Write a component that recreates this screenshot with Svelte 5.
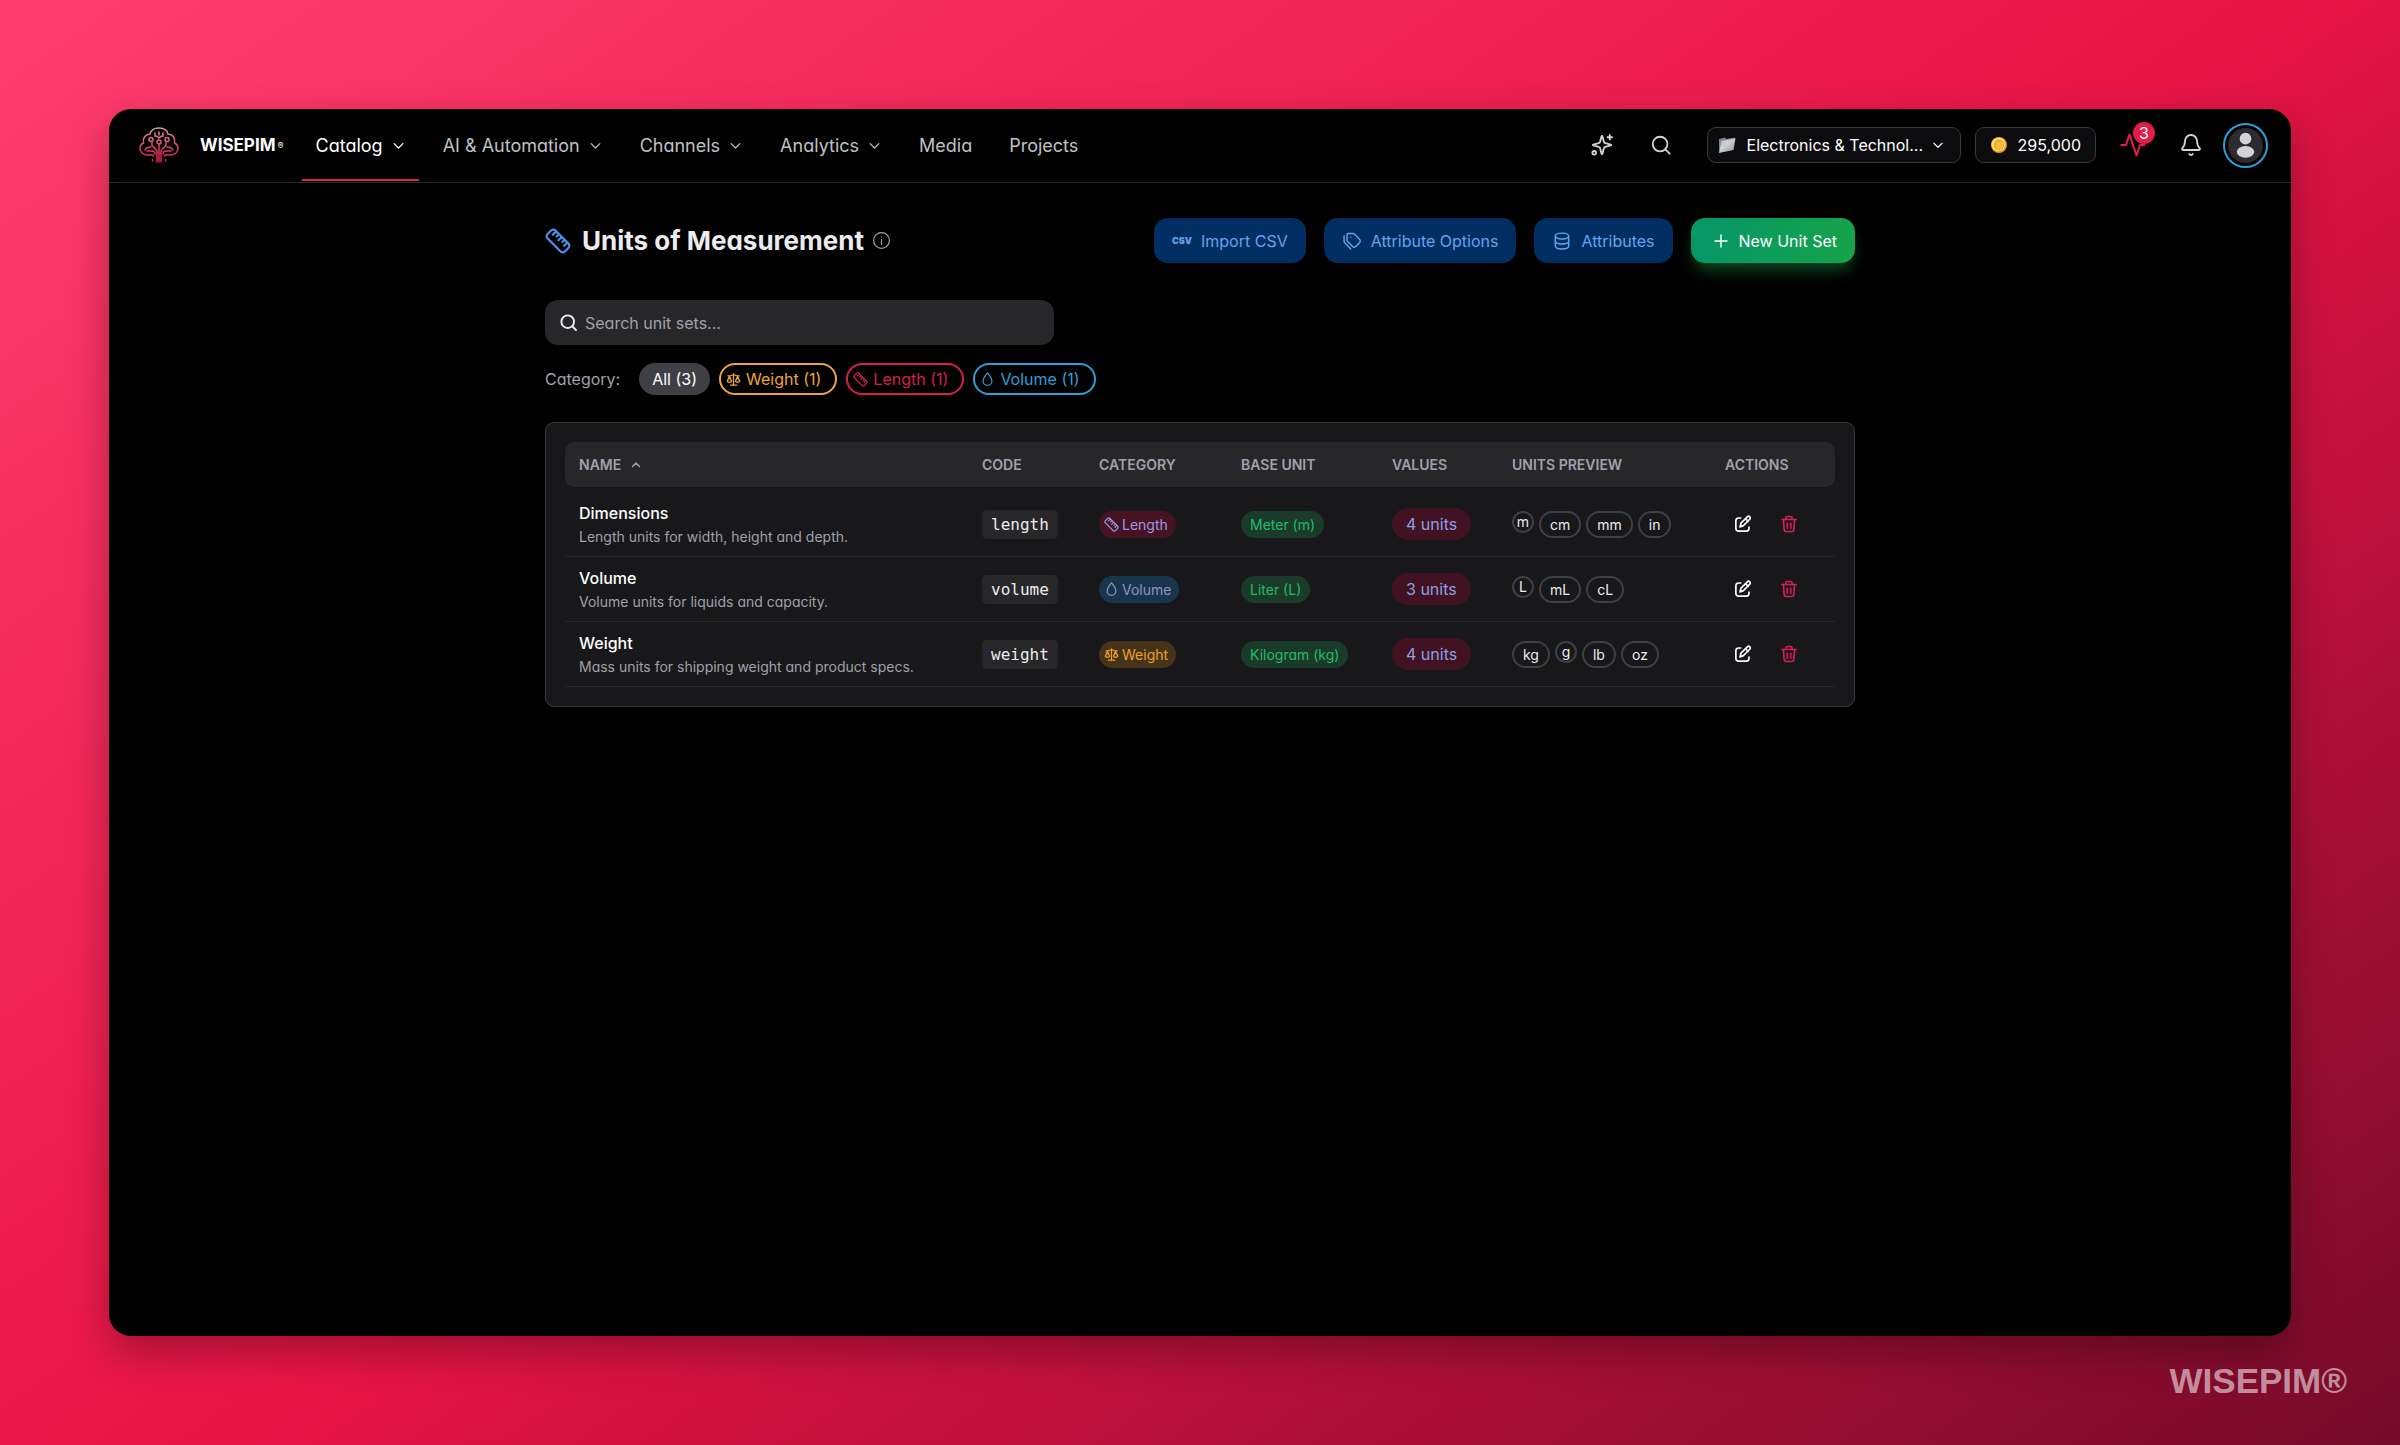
<script lang="ts">
  interface UnitSet {
    name: string;
    description: string;
    code: string;
    category: string;
    baseUnit: string;
    units: string[];
  }

  const icons: Record<string, string[]> = {
    chevron: ['M5 9l7 7 7-7'],
    search: ['M11 3a8 8 0 1 0 0 16a8 8 0 0 0 0-16', 'M17 17l4.5 4.5'],
    sparkles: [
      'M9.937 15.5A2 2 0 0 0 8.5 14.063l-6.135-1.582a.5.5 0 0 1 0-.962L8.5 9.936A2 2 0 0 0 9.937 8.5l1.582-6.135a.5.5 0 0 1 .963 0L14.063 8.5A2 2 0 0 0 15.5 9.937l6.135 1.581a.5.5 0 0 1 0 .964L15.5 14.063a2 2 0 0 0-1.437 1.437l-1.582 6.135a.5.5 0 0 1-.963 0z',
      'M20.5 1v5',
      'M23 3.5h-5',
      'M3.5 18.5a2 2 0 1 0 0 4a2 2 0 0 0 0-4'
    ],
    activity: ['M22 12h-4l-3 9L9 3l-3 9H2'],
    bell: [
      'M10.268 21a2 2 0 0 0 3.464 0',
      'M3.262 15.326A1 1 0 0 0 4 17h16a1 1 0 0 0 .74-1.673C19.41 13.956 18 12.499 18 8A6 6 0 0 0 6 8c0 4.499-1.411 5.956-2.738 7.326'
    ],
    info: ['M12 2a10 10 0 1 0 0 20a10 10 0 0 0 0-20', 'M12 11v6', 'M12 7.5v.1'],
    length: [
      'M2.6 5.4l2.8-2.8c1.4-1.4 3-1.4 4.4 0l11.6 11.6c1.4 1.4 1.4 3 0 4.4l-2.8 2.8c-1.4 1.4-3 1.4-4.4 0L2.6 9.8c-1.4-1.4-1.4-3 0-4.4z',
      'M10 3.4L7.2 6.2',
      'M12.6 6l-1.8 1.8',
      'M15.2 8.6l-2.8 2.8',
      'M17.8 11.2L16 13',
      'M20.3 13.7l-2.7 2.7'
    ],
    weight: [
      'M12 3v18',
      'M7 21h10',
      'M3 6h3c2 0 4-1 6-2 2 1 4 2 6 2h3',
      'M5.5 7l-3.5 8c2 1.8 5 1.8 7 0z',
      'M18.5 7l-3.5 8c2 1.8 5 1.8 7 0z'
    ],
    volume: ['M12 1.5c3 4 7 8 7 13a7 7 0 0 1-14 0c0-5 4-9 7-13z'],
    tags: [
      'M6 4.5C6 3.5 6.5 3 7.5 3h5.7c.7 0 1.3.2 1.8.7l6 6.3c1.2 1.2 1.2 2.8 0 4l-4.5 4.6c-1.2 1.2-2.6 1.2-3.8 0L6.7 12.5C6.2 12 6 11.5 6 10.8z',
      'M10.5 7.5v.1',
      'M2.5 6v6c0 .8.3 1.5.8 2l7.2 7.5'
    ],
    database: [
      'M4 6c0-2 3.5-3.5 8-3.5S20 4 20 6s-3.5 3.5-8 3.5S4 8 4 6z',
      'M4 6v12c0 2 3.5 3.5 8 3.5s8-1.5 8-3.5V6',
      'M4 12c0 2 3.5 3.5 8 3.5s8-1.5 8-3.5'
    ],
    plus: ['M12 4v16', 'M4 12h16'],
    edit: [
      'M9 4H6.5C4 4 2.5 5 2.5 7.5v10C2.5 20 4 21.5 6.5 21.5h10c2.5 0 3.5-1.5 3.5-3.5V16',
      'M17.8 2.4c1-1 2.3-.8 3.2.1s1 2.2 0 3.2l-8.5 8.5L8 15.8l1.3-4.9z',
      'M15.5 5l3.4 3.4'
    ],
    trash: [
      'M2.5 6h19',
      'M8 6V3.5C8 2.5 8.5 2 9.5 2h5c1 0 1.5.5 1.5 1.5V6',
      'M4.5 6l1 13c.1 2 1 3 3 3h7c2 0 2.9-1 3-3l1-13',
      'M9.7 11v6.5',
      'M14.3 11v6.5'
    ]
  };

  const navItems = [
    { label: 'Catalog', menu: true },
    { label: 'AI & Automation', menu: true },
    { label: 'Channels', menu: true },
    { label: 'Analytics', menu: true },
    { label: 'Media', menu: false },
    { label: 'Projects', menu: false }
  ];

  const unitSets: UnitSet[] = [
    {
      name: 'Dimensions',
      description: 'Length units for width, height and depth.',
      code: 'length',
      category: 'Length',
      baseUnit: 'Meter (m)',
      units: ['m', 'cm', 'mm', 'in']
    },
    {
      name: 'Volume',
      description: 'Volume units for liquids and capacity.',
      code: 'volume',
      category: 'Volume',
      baseUnit: 'Liter (L)',
      units: ['L', 'mL', 'cL']
    },
    {
      name: 'Weight',
      description: 'Mass units for shipping weight and product specs.',
      code: 'weight',
      category: 'Weight',
      baseUnit: 'Kilogram (kg)',
      units: ['kg', 'g', 'lb', 'oz']
    }
  ];

  const categories = ['Weight', 'Length', 'Volume'];

  let activeNav = $state('Catalog');
  let query = $state('');
  let category = $state('All');
  let ascending = $state(true);

  let visibleSets = $derived(
    unitSets
      .filter((s) => category === 'All' || s.category === category)
      .filter((s) => s.name.toLowerCase().includes(query.trim().toLowerCase()))
      .sort((a, b) => (ascending ? 1 : -1) * a.name.localeCompare(b.name))
  );

  function countFor(name: string) {
    return unitSets.filter((s) => s.category === name).length;
  }
</script>

{#snippet icon(name: string, size: number, weight = 1.5)}
  <svg
    class="icon"
    width={size}
    height={size}
    viewBox="0 0 24 24"
    fill="none"
    stroke="currentColor"
    stroke-width={weight}
    stroke-linecap="round"
    stroke-linejoin="round"
    aria-hidden="true"
  >
    {#each icons[name] as d}
      <path {d} />
    {/each}
  </svg>
{/snippet}

<div class="backdrop">
  <div class="window">
    <header class="topbar">
      <a class="brand" href="#home">
        <svg class="logo" width="40" height="36" viewBox="0 0 40 36" fill="none" stroke="url(#logo-fill)" stroke-width="1.5" stroke-linecap="round" aria-hidden="true">
          <defs>
            <linearGradient id="logo-fill" x1="0" y1="0" x2="0" y2="36" gradientUnits="userSpaceOnUse">
              <stop offset="0" stop-color="#e8a0aa" />
              <stop offset="0.5" stop-color="#d84b6c" />
              <stop offset="1" stop-color="#e0174c" />
            </linearGradient>
          </defs>
          <path d="M14 28H8c-4 0-7-3-7-6.5 0-2.5 1.5-4.5 3.5-5.5C3.5 11 6 7.5 11 7c1-4 5-6 9-6s8 2 9 6c5 .5 7.500 4 6.5 9 2 1 3.5 3 3.5 5.5 0 3.5-3 6.5-7 6.5h-6" />
          <path d="M20 17v18M18 35V25c0-3-3-4-5-6.5v-4M22 35V25c0-3 3-4 5-6.5v-4" />
          <path d="M14 28v1M26 28v1" />
          <path d="M12 20c-3 0-5 1-6 3M28 20c3 0 5 1 6 3M8 24h5c2 0 3 1 3 3M32 24h-5c-2 0-3 1-3 3" />
          <path d="M16 6v3c2 0 3 .5 4 2 1-1.5 2-2 4-2V6M20 5v3" />
          <circle cx="20" cy="15" r="2" />
          <circle cx="12" cy="12.5" r="2" />
          <circle cx="28" cy="12.5" r="2" />
          <path d="M13.5 32.5v1.5M26.5 32.5v1.5" />
        </svg>
        <span class="brand-name">WISEPIM<small>®</small></span>
      </a>

      <nav class="nav" aria-label="Main">
        {#each navItems as item}
          <a
            href="#{item.label}"
            class="nav-item"
            class:active={activeNav === item.label}
            onclick={() => (activeNav = item.label)}
          >
            {item.label}
            {#if item.menu}{@render icon('chevron', 15, 2)}{/if}
          </a>
        {/each}
      </nav>

      <div class="tools">
        <button class="tool" type="button" aria-label="AI assistant">{@render icon('sparkles', 22, 2)}</button>
        <button class="tool search-tool" type="button" aria-label="Search">{@render icon('search', 22, 2)}</button>
        <label class="project">
          <svg class="icon" width="18" height="18" viewBox="0 0 18 18" aria-hidden="true">
            <defs>
              <linearGradient id="folder-fill" x1="0" y1="0" x2="1" y2="1">
                <stop offset="0" stop-color="#a9b0ba" />
                <stop offset="0.4" stop-color="#d0d4da" />
                <stop offset="1" stop-color="#858d98" />
              </linearGradient>
            </defs>
            <path d="M1 3l6-1.5 1 1.5 9-1.5V4L3 6 1 16z" fill="#7c8490" />
            <path d="M3 5l14.5-2.5L15.5 14 1 17z" fill="url(#folder-fill)" />
          </svg>
          <select aria-label="Project">
            <option>Electronics &amp; Technol...</option>
          </select>
          {@render icon('chevron', 14, 2)}
        </label>
        <button class="credits" type="button">
          <svg class="icon" width="16" height="16" viewBox="0 0 16 16" aria-hidden="true">
            <circle cx="8" cy="8" r="8" fill="#e29a26" />
            <circle cx="7.5" cy="7.5" r="7" fill="#f9d56b" />
            <circle cx="8" cy="8" r="5" fill="#e8a021" />
            <circle cx="8.5" cy="8.5" r="4" fill="#f7bd3c" />
          </svg>
          295,000
        </button>
        <button class="tool activity" type="button" aria-label="Activity">
          {@render icon('activity', 28, 1.8)}
          <span class="badge">3</span>
        </button>
        <button class="tool bell" type="button" aria-label="Notifications">{@render icon('bell', 24, 1.8)}</button>
        <button class="avatar" type="button" aria-label="Account">
          <svg width="35" height="35" viewBox="0 0 36 36" aria-hidden="true">
            <circle cx="18" cy="18" r="18" fill="#2c2c30" />
            <circle cx="18" cy="11" r="6" fill="#d4d4d8" />
            <ellipse cx="18" cy="24.5" rx="9" ry="6" fill="#d4d4d8" />
          </svg>
        </button>
      </div>
    </header>

    <main class="page">
      <div class="page-head">
        <span class="title-icon">{@render icon('length', 26, 2)}</span>
        <h1>Units of Measurement</h1>
        <span class="info">{@render icon('info', 19, 1.5)}</span>
        <div class="page-actions">
          <button class="action" type="button"><b class="csv" aria-hidden="true">CSV</b>Import CSV</button>
          <button class="action" type="button">{@render icon('tags', 20, 1.7)}Attribute Options</button>
          <button class="action" type="button">{@render icon('database', 20, 1.7)}Attributes</button>
          <button class="action create" type="button">{@render icon('plus', 18, 2)}New Unit Set</button>
        </div>
      </div>

      <label class="search-box">
        {@render icon('search', 19, 2.4)}
        <input type="text" aria-label="Search unit sets" placeholder="Search unit sets..." bind:value={query} />
      </label>

      <div class="filters">
        <span class="filters-label">Category:</span>
        <button class="filter all" type="button" onclick={() => (category = 'All')}>All ({unitSets.length})</button>
        {#each categories as name}
          <button class="filter {name.toLowerCase()}" type="button" onclick={() => (category = name)}>
            {@render icon(name.toLowerCase(), 15, 2)}{name} ({countFor(name)})
          </button>
        {/each}
      </div>

      <section class="card">
        <table>
          <colgroup>
            <col />
            <col class="col-code" />
            <col class="col-category" />
            <col class="col-base" />
            <col class="col-values" />
            <col class="col-preview" />
            <col class="col-actions" />
          </colgroup>
          <thead>
            <tr>
              <th aria-sort={ascending ? 'ascending' : 'descending'}>
                <button class="sort" class:descending={!ascending} type="button" onclick={() => (ascending = !ascending)}>
                  NAME {@render icon('chevron', 12, 3)}
                </button>
              </th>
              <th>CODE</th>
              <th>CATEGORY</th>
              <th>BASE UNIT</th>
              <th>VALUES</th>
              <th>UNITS PREVIEW</th>
              <th>ACTIONS</th>
            </tr>
          </thead>
          <tbody>
            <tr class="spacer" aria-hidden="true"></tr>
            {#each visibleSets as set (set.code)}
              <tr>
                <td class="name-cell">
                  <div class="name">{set.name}</div>
                  <div class="description">{set.description}</div>
                </td>
                <td><code>{set.code}</code></td>
                <td>
                  <span class="tag {set.category.toLowerCase()}">
                    {@render icon(set.category.toLowerCase(), 15, 2)}{set.category}
                  </span>
                </td>
                <td><span class="tag base">{set.baseUnit}</span></td>
                <td><span class="tag count">{set.units.length} units</span></td>
                <td>
                  <div class="units">
                    {#each set.units as unit}
                      <span class="unit" class:single={unit.length === 1}>{unit}</span>
                    {/each}
                  </div>
                </td>
                <td>
                  <div class="row-actions">
                    <button type="button" aria-label="Edit {set.name}">{@render icon('edit', 18, 2.2)}</button>
                    <button class="delete" type="button" aria-label="Delete {set.name}">{@render icon('trash', 18, 2.2)}</button>
                  </div>
                </td>
              </tr>
            {/each}
          </tbody>
        </table>
      </section>
    </main>
  </div>

  <footer class="watermark">WISEPIM®</footer>
</div>

<style>
  :global(body) {
    margin: 0;
  }

  .backdrop {
    box-sizing: border-box;
    min-height: 100vh;
    padding: 109px 109px 0;
    display: flex;
    flex-direction: column;
    background: linear-gradient(145deg, #ff3d6f 0%, #e81446 51%, #750a2a 100%);
    font-family: Inter, 'Liberation Sans', sans-serif;
    font-feature-settings: 'cv11';
    font-size: 16px;
    color: #ececee;
  }

  .window {
    flex: 1;
    border-radius: 22px;
    background: #000;
    box-shadow: 0 16px 40px rgba(0, 0, 0, 0.3);
  }

  button,
  input,
  select {
    font: inherit;
    font-feature-settings: inherit;
    color: inherit;
    background: none;
    border: 0;
    padding: 0;
    margin: 0;
  }

  button {
    cursor: pointer;
  }

  a {
    color: inherit;
    text-decoration: none;
  }

  .icon {
    display: block;
    flex: none;
  }

  /* Top bar */
  .topbar {
    display: flex;
    align-items: center;
    height: 72px;
    padding: 0 23px 1px 30px;
    border-bottom: 1px solid #27272a;
  }

  .brand {
    display: flex;
    align-items: center;
    gap: 21px;
    margin-right: 18px;
  }

  .brand-name {
    display: flex;
    align-items: center;
    font-size: 17px;
    font-weight: 700;
    color: #fff;
  }

  .brand-name small {
    margin-left: 2px;
    font-size: 9px;
    font-weight: 400;
  }

  .nav {
    display: flex;
    align-self: stretch;
    gap: 10px;
  }

  .nav-item {
    display: flex;
    align-items: center;
    gap: 8px;
    padding: 2px 13px 0 14px;
    border-bottom: 2px solid transparent;
    font-size: 18px;
    color: #c0c0c4;
  }

  .nav-item.active {
    color: #fff;
    border-color: #d6284f;
  }

  .tools {
    display: flex;
    align-items: center;
    margin-left: auto;
  }

  .tool {
    color: #d4d4d8;
  }

  .search-tool {
    margin: 0 35px 0 37px;
  }

  .project,
  .credits {
    display: flex;
    align-items: center;
    box-sizing: border-box;
    height: 36px;
    border: 1px solid #3a3a3e;
    border-radius: 9px;
    background: #0c0c0e;
    color: #fff;
    font-size: 16px;
  }

  .project {
    width: 254px;
    padding: 0 15px 0 10px;
    margin-right: 14px;
    gap: 4px;
  }

  .project select {
    flex: 1;
    min-width: 0;
    padding-left: 7px;
    appearance: none;
  }

  .credits {
    padding: 0 14px 0 15px;
    gap: 11px;
  }

  .activity {
    position: relative;
    margin: 0 32px 0 23px;
    color: #e11d48;
  }

  .badge {
    position: absolute;
    top: -9px;
    right: -8px;
    width: 22px;
    height: 22px;
    border-radius: 11px;
    background: #e11d48;
    color: #fff;
    font-size: 16px;
    line-height: 22px;
    text-align: center;
  }

  .bell {
    margin-right: 20px;
  }

  .avatar {
    display: flex;
    padding: 3px;
    border: 2px solid #2a9fd8;
    border-radius: 50%;
  }

  /* Page */
  .page {
    max-width: 1310px;
    margin: 0 auto;
    padding-top: 35px;
  }

  .page-head {
    display: flex;
    align-items: center;
    height: 45px;
  }

  .title-icon {
    color: #4a8fe8;
  }

  h1 {
    margin: 0 8px 0 11px;
    font-size: 26px;
    font-weight: 700;
  }

  .info {
    color: #a1a1aa;
  }

  .page-actions {
    display: flex;
    gap: 18px;
    margin-left: auto;
  }

  .action {
    display: flex;
    align-items: center;
    gap: 9px;
    height: 45px;
    padding: 0 18px;
    border-radius: 14px;
    background: #002e62;
    color: #66a3ee;
    font-size: 16px;
  }

  .csv {
    font-size: 9px;
    font-weight: 900;
  }

  .create {
    padding-left: 21px;
    background: linear-gradient(90deg, #059669, #16a34a);
    color: #fff;
    box-shadow: 0 10px 16px -4px rgba(22, 163, 74, 0.5);
  }

  .search-box {
    display: flex;
    align-items: center;
    gap: 7px;
    box-sizing: border-box;
    width: 509px;
    height: 45px;
    margin-top: 37px;
    padding: 0 14px;
    border-radius: 13px;
    background: #27272a;
  }

  .search-box input {
    flex: 1;
    min-width: 0;
    outline: none;
  }

  .search-box input::placeholder {
    color: #a1a1aa;
    opacity: 1;
  }

  .filters {
    display: flex;
    align-items: center;
    gap: 9px;
    margin: 18px 0 27px;
  }

  .filters-label {
    margin-right: 10px;
    color: #a1a1aa;
  }

  .filter {
    display: flex;
    align-items: center;
    gap: 5px;
    box-sizing: border-box;
    height: 32px;
    padding: 0 14px 0 5px;
    border: 2px solid currentColor;
    border-radius: 16px;
  }

  .filter.all {
    padding: 0 11px;
    border-color: #3f3f46;
    background: #3f3f46;
    color: #fff;
  }

  .filter.weight {
    color: #eda637;
  }

  .filter.length {
    color: #d61f4f;
  }

  .filter.volume {
    color: #2e9fd6;
  }

  /* Table */
  .card {
    padding: 19px;
    border: 1px solid #39393d;
    border-radius: 9px;
    background: #18181b;
  }

  table {
    width: 100%;
    table-layout: fixed;
    border-collapse: separate;
    border-spacing: 0;
  }

  .col-code {
    width: 117px;
  }

  .col-category {
    width: 142px;
  }

  .col-base {
    width: 151px;
  }

  .col-values {
    width: 120px;
  }

  .col-preview {
    width: 213px;
  }

  .col-actions {
    width: 124px;
  }

  th,
  td {
    padding: 0 0 0 14px;
    text-align: left;
  }

  th {
    height: 45px;
    background: #27272a;
    color: #a1a1aa;
    font-size: 14px;
    font-weight: 600;
  }

  th:first-child {
    border-radius: 9px 0 0 9px;
  }

  th:last-child {
    border-radius: 0 9px 9px 0;
  }

  .sort {
    display: flex;
    align-items: center;
    gap: 9px;
  }

  .sort .icon {
    transform: rotate(180deg);
  }

  .sort.descending .icon {
    transform: none;
  }

  .spacer {
    height: 5px;
  }

  td {
    height: 64px;
    border-bottom: 1px solid #27272a;
  }

  .name-cell {
    height: 62px;
    padding-top: 2px;
  }

  .name {
    font-weight: 500;
    line-height: 24px;
    color: #fff;
  }

  .description {
    font-size: 14px;
    line-height: 24px;
    color: #a1a1aa;
  }

  code {
    display: inline-block;
    padding: 0 9px;
    border-radius: 5px;
    background: #27272a;
    font-family: 'DejaVu Sans Mono', monospace;
    font-size: 16px;
    line-height: 29px;
  }

  .tag {
    display: inline-flex;
    align-items: center;
    gap: 3px;
    height: 27px;
    padding: 0 8px 0 5px;
    border-radius: 16px;
    font-size: 14px;
    vertical-align: middle;
  }

  .tag.length {
    background: #451322;
    color: #9d9ae2;
  }

  .tag.volume {
    background: #17364b;
    color: #938fcf;
  }

  .tag.weight {
    background: #45331a;
    color: #f0a12c;
  }

  .tag.base {
    padding: 0 9px;
    background: #1a3b2a;
    color: #22bd68;
  }

  .tag.count {
    height: 32px;
    padding: 0 14px;
    background: #411322;
    color: #8f9ee6;
    font-size: 16px;
  }

  .units {
    display: flex;
    align-items: flex-start;
    gap: 5px;
  }

  .unit {
    box-sizing: border-box;
    height: 27px;
    padding: 0 9px;
    border: 2px solid #3f3f46;
    border-radius: 14px;
    font-size: 14px;
    line-height: 23px;
  }

  .unit.single {
    width: 22px;
    height: 22px;
    padding: 0;
    line-height: 18px;
    text-align: center;
  }

  .row-actions {
    display: flex;
    align-items: center;
    gap: 28px;
    padding-left: 9px;
    color: #fff;
  }

  .delete {
    color: #d61f56;
  }

  .watermark {
    display: flex;
    align-items: center;
    justify-content: flex-end;
    box-sizing: border-box;
    height: 109px;
    margin-right: -56px;
    padding-bottom: 20px;
    font-family: 'Liberation Sans', sans-serif;
    font-size: 35px;
    font-weight: 700;
    color: rgba(255, 255, 255, 0.55);
  }
</style>
